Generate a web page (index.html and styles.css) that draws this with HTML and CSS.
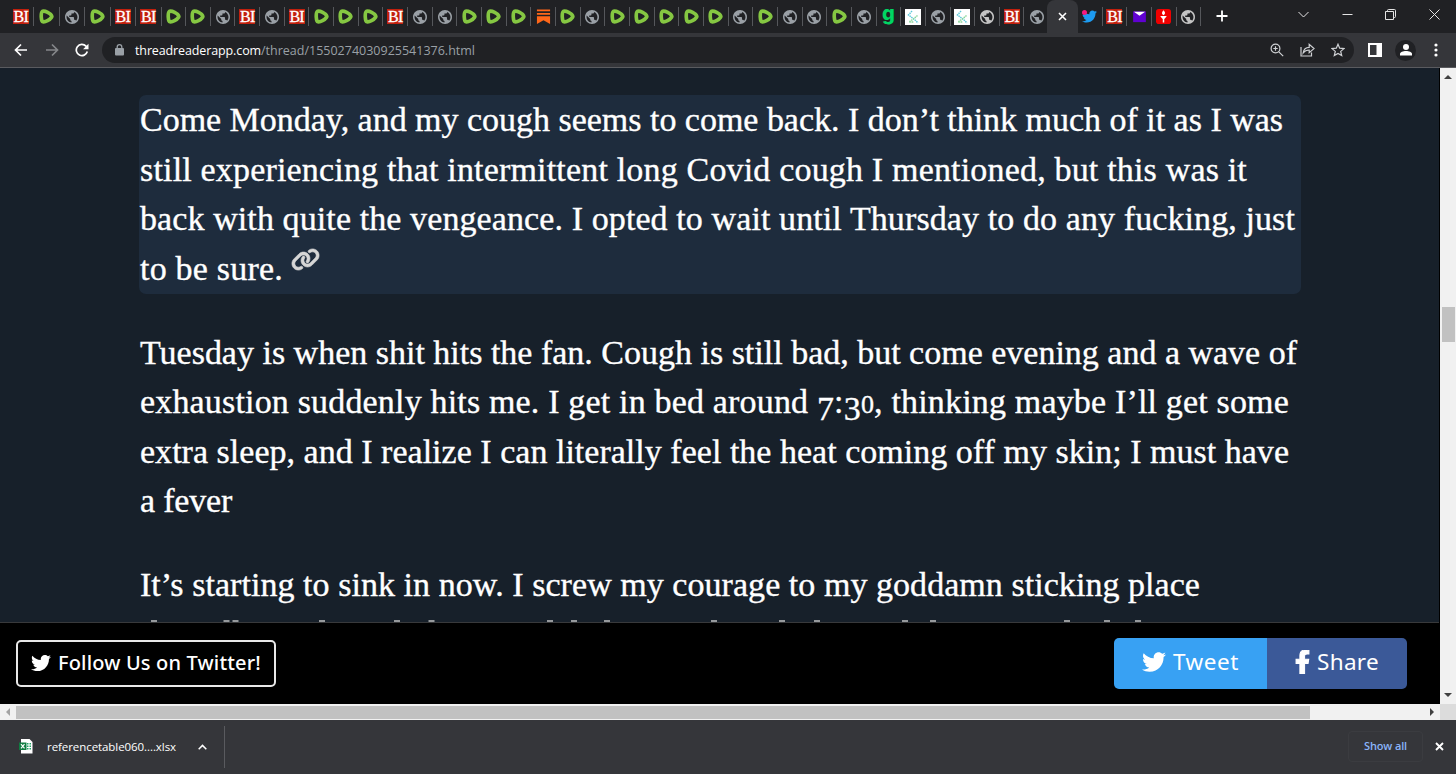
FILE: index.html
```html
<!DOCTYPE html>
<html lang="en">
<head>
  <meta charset="UTF-8" />
  <title>Thread Reader</title>
  <link rel="stylesheet" href="styles.css">
</head>
<body>
  <svg class="defs">
    <symbol id="globe" viewBox="2 2 20 20"><path fill="currentColor" d="M12 2C6.48 2 2 6.48 2 12s4.48 10 10 10 10-4.48 10-10S17.52 2 12 2z"/><path fill="#202124" d="M4.300 9.800 9.500 15v1c0 1 .9 1.600 1.800 1.600v2.300C7.300 19.600 4.200 16.200 4.200 12zM17.800 17.300c-.3-.9-1-1.400-1.900-1.400h-1v-2.700c0-.7-.5-1.200-1.100-1.200H8V9.700h2.200c.6 0 1-.4 1-1V7h2c1 0 1.800-.8 1.800-1.800v-.5c2.800 1.200 4.800 4 4.800 7.300 0 2.100-.7 3.900-2 5.300z"/></symbol>
    <symbol id="rumble" viewBox="0.500 0.700 14.800 14.800"><path d="M4 2.9C6.500 2.200 12 5 13 7.400c.3.600.2 1.100-.2 1.600C11 11.600 7 13.700 4.300 13.300 2.500 12.900 2 4.200 4 2.900z" fill="#202124" stroke="#85c742" stroke-width="3.600" stroke-linejoin="round"/><path d="M6.300 5.700v4.500l3.900-2.200z" fill="#202124"/></symbol>
    <symbol id="substack" viewBox="0 0 16 16"><path fill="#ff6719" d="M1 .5h14v2H1zM1 4.200h14v2H1zM1 7.600h14V16l-7-4-7 4z"/></symbol>
    <symbol id="dots" viewBox="0 0 16 16"><path fill="#fff" d="M0 0h16v16H0z"/><g fill="none" stroke-width="1.500" stroke-dasharray="1.500 .7"><path stroke="#5cc8d8" d="M7 2 3.500 6l6 4.500L13 14"/><path stroke="#8ad69a" d="M12.500 6.500 9 9.500l-5 3.500h5"/></g></symbol>
    <symbol id="mail" viewBox="0 0 16 16"><path fill="#6001d2" d="M1.200 2.500h13.600v11.500H1.200z"/><path fill="#fff" d="M2 3h12L8 7.300z"/></symbol>
    <symbol id="torch" viewBox="0 0 16 16"><rect width="16" height="16" rx="3" fill="#f00000"/><path fill="#fff" d="M8 1.200c2.200 1.900 2.200 4.200 0 5.400-2.200-1.200-2.200-3.500 0-5.400zM4.500 7.400h7l-2.200 3H6.700zM7.200 10h1.600v4.500H7.200z"/></symbol>
    <symbol id="bird" viewBox="0 0 512 512"><path fill="currentColor" d="M459.37 151.716c.325 4.548.325 9.097.325 13.645 0 138.72-105.583 298.558-298.558 298.558-59.452 0-114.68-17.219-161.137-47.106 8.447.974 16.568 1.299 25.34 1.299 49.055 0 94.213-16.568 130.274-44.832-46.132-.975-84.792-31.188-98.112-72.772 6.498.974 12.995 1.624 19.818 1.624 9.421 0 18.843-1.3 27.614-3.573-48.081-9.747-84.143-51.98-84.143-102.985v-1.299c13.969 7.797 30.214 12.67 47.431 13.319-28.264-18.843-46.781-51.005-46.781-87.391 0-19.492 5.197-37.36 14.294-52.954 51.655 63.675 129.3 105.258 216.365 109.807-1.624-7.797-2.599-15.918-2.599-24.04 0-57.828 46.782-104.934 104.934-104.934 30.213 0 57.502 12.67 76.67 33.137 23.715-4.548 46.456-13.32 66.599-25.34-7.798 24.366-24.366 44.833-46.132 57.827 21.117-2.273 41.584-8.122 60.426-16.243-14.292 20.791-32.161 39.308-52.628 54.253z"/></symbol>
  </svg>

  <header class="tabstrip">
    <div class="tabs" id="tabsLeft"></div>
    <div class="active-tab"><svg width="9" height="9" viewBox="0 0 9 9"><path d="M1 1l7 7M8 1L1 8" stroke="#fff" stroke-width="1.600"/></svg></div>
    <div class="tabs" id="tabsRight"></div>
    <svg class="new-tab" width="12" height="12" viewBox="0 0 12 12"><path d="M6 .5v11M.5 6h11" stroke="#fff" stroke-width="1.800"/></svg>
    <div class="window-buttons">
      <svg width="11" height="11" viewBox="0 0 11 11"><path d="M.5 3l5 5 5-5"/></svg>
      <svg width="11" height="11" viewBox="0 0 11 11"><path d="M.5 5.500h10"/></svg>
      <svg width="11" height="11" viewBox="0 0 11 11"><path d="M.5 2.500h8v8h-8zM2.500 2.500V1.500q0-1 1-1h6q1 0 1 1v6q0 1-1 1h-1"/></svg>
      <svg width="11" height="11" viewBox="0 0 11 11"><path d="M.5.5l10 10M10.500.5l-10 10"/></svg>
    </div>
  </header>

  <nav class="toolbar">
    <div class="nav-buttons">
      <svg width="14" height="14" viewBox="0 0 14 14"><path d="M13 7H1.500M7 1.500L1.500 7 7 12.500" stroke="#fff"/></svg>
      <svg width="14" height="14" viewBox="0 0 14 14"><path d="M1 7h11.500M7 1.500L12.500 7 7 12.500" stroke="#85878a"/></svg>
      <svg width="14" height="14" viewBox="0 0 14 14"><path d="M12.300 8.500A5.600 5.600 0 1 1 11 3.200L12.500 4.700" stroke="#fff"/><path d="M13.500 .8v5.400H8.100z" fill="#fff"/></svg>
    </div>
    <div class="omnibox">
      <svg class="lock" width="9" height="12" viewBox="0 0 9 12"><path d="M2.200 5V3a2.300 2.300 0 0 1 4.600 0v2" fill="none" stroke="#9aa0a6" stroke-width="1.300"/><rect y="4" width="9" height="7.500" rx="1" fill="#9aa0a6"/></svg>
      <span class="domain" data-w="126">threadreaderapp.com</span><span class="path" data-w="214">/thread/1550274030925541376.html</span>
      <div class="box-actions">
        <svg width="14" height="14" viewBox="0 0 14 14"><circle cx="5.500" cy="5.500" r="4.400"/><path d="M8.800 8.800l4.400 4.400M3.300 5.500h4.400M5.500 3.300v4.400"/></svg>
        <svg width="15" height="14" viewBox="0 0 15 14"><path d="M1 4v9h10.500V9.500M3.200 9.800C3.700 6.200 6 4.300 9.200 4.300V1.400l4.800 4.200-4.800 4.100V7C6.500 7 4.700 7.800 3.200 9.800z"/></svg>
        <svg width="14" height="14" viewBox="0 0 14 14"><path d="M7 1.200l1.700 4 4.300.4-3.300 2.800 1 4.200L7 10.400l-3.700 2.200 1-4.200L1 5.600l4.300-.4z"/></svg>
      </div>
    </div>
    <svg class="side-panel" width="14" height="14" viewBox="0 0 14 14"><path fill="#fff" fill-rule="evenodd" d="M0 0h14v14H0zM2 2v10h6.500V2z"/></svg>
    <div class="avatar"><svg width="12" height="12" viewBox="0 0 12 12"><circle cx="6" cy="3" r="3"/><path d="M0 11.500V10c0-2 3-3 6-3s6 1 6 3v1.500z"/></svg></div>
    <svg class="kebab" width="4" height="14" viewBox="0 0 4 14"><circle cx="2" cy="2" r="1.600"/><circle cx="2" cy="7" r="1.600"/><circle cx="2" cy="12" r="1.600"/></svg>
  </nav>

  <div class="viewport">
    <div class="page">
      <main class="thread">
        <p class="tweet highlighted">
          <span class="line" data-w="1143">Come Monday, and my cough seems to come back. I don’t think much of it as I was</span>
          <span class="line" data-w="1107">still experiencing that intermittent long Covid cough I mentioned, but this was it</span>
          <span class="line" data-w="1155">back with quite the vengeance. I opted to wait until Thursday to do any fucking, just</span>
          <span class="line" data-w="143">to be sure.</span>
          <svg class="permalink" width="29" height="23" viewBox="0 0 640 512"><path fill="#d6d6d6" stroke="#d6d6d6" stroke-width="14" d="M579.8 267.7c56.5-56.5 56.5-148 0-204.5c-50-50-128.8-56.5-186.3-15.4l-1.6 1.1c-14.4 10.3-17.7 30.3-7.4 44.6s30.3 17.7 44.6 7.4l1.6-1.1c32.1-22.9 76-19.3 103.8 8.6c31.5 31.5 31.5 82.5 0 114L422.3 334.8c-31.5 31.5-82.5 31.5-114 0c-27.9-27.9-31.5-71.8-8.6-103.8l1.1-1.6c10.3-14.4 6.9-34.4-7.4-44.6s-34.4-6.900-44.6 7.4l-1.1 1.6C206.5 251.2 213 330 263 380c56.5 56.5 148 56.5 204.5 0L579.8 267.7zM60.2 244.3c-56.5 56.5-56.5 148 0 204.5c50 50 128.8 56.5 186.3 15.4l1.6-1.1c14.4-10.3 17.7-30.3 7.4-44.6s-30.3-17.7-44.6-7.4l-1.6 1.1c-32.1 22.9-76 19.3-103.8-8.6C74 372 74 321 105.5 289.5L217.7 177.2c31.5-31.5 82.5-31.5 114 0c27.9 27.9 31.5 71.8 8.6 103.9l-1.1 1.6c-10.3 14.4-6.900 34.4 7.4 44.6s34.4 6.900 44.6-7.4l1.1-1.6C433.5 260.8 427 182 377 132c-56.5-56.5-148-56.5-204.5 0L60.2 244.3z"/></svg>
        </p>
        <p class="tweet">
          <span class="line" data-w="1157">Tuesday is when shit hits the fan. Cough is still bad, but come evening and a wave of</span>
          <span class="line" data-w="1149">exhaustion suddenly hits me. I get in bed around <span class="low">7</span>:<span class="low">3</span><span class="small">0</span>, thinking maybe I’ll get some</span>
          <span class="line" data-w="1149">extra sleep, and I realize I can literally feel the heat coming off my skin; I must have</span>
          <span class="line" data-w="92">a fever</span>
        </p>
        <p class="tweet">
          <span class="line" data-w="1060">It’s starting to sink in now. I screw my courage to my goddamn sticking place</span>
          <svg class="cut-line" id="cutLine" width="1160" height="2"></svg>
        </p>
      </main>
      <footer class="share-bar">
        <a class="follow"><svg width="20" height="20"><use href="#bird"/></svg><span data-w="203">Follow Us on Twitter!</span></a>
        <div class="share-buttons">
          <a class="tweet-btn"><svg width="24" height="24"><use href="#bird"/></svg><span data-w="66">Tweet</span></a>
          <a class="share-btn"><svg width="15" height="24" viewBox="0 0 320 512"><path fill="#fff" stroke="#fff" stroke-width="22" d="M279.14 288l14.22-92.66h-88.91v-60.13c0-25.35 12.42-50.06 52.24-50.06h40.42V6.260S260.43 0 225.36 0c-73.22 0-121.08 44.38-121.08 124.72v70.62H22.89V288h81.39v224h100.17V288z"/></svg><span data-w="62">Share</span></a>
        </div>
      </footer>
    </div>
    <div class="vscroll">
      <svg width="8" height="4" viewBox="0 0 8 4"><path d="M0 4l4-4 4 4z"/></svg>
      <div class="vthumb"></div>
      <svg width="8" height="4" viewBox="0 0 8 4"><path d="M0 0l4 4 4-4z"/></svg>
    </div>
  </div>

  <div class="hscroll">
    <svg width="4" height="8" viewBox="0 0 4 8"><path d="M4 0L0 4l4 4z" fill="#a3a3a3"/></svg>
    <div class="hthumb"></div>
    <svg class="right" width="4" height="8" viewBox="0 0 4 8"><path d="M0 0l4 4-4 4z" fill="#404040"/></svg>
    <div class="corner"></div>
  </div>

  <div class="downloads">
    <svg class="excel" width="14" height="15" viewBox="0 0 14 15"><path fill="#fff" d="M2 0h8.500L13.500 3v11.500H2z"/><path fill="#21a366" d="M8 4h1.500v1.500H8zM10.500 4H12v1.500h-1.500zM8 6.500h1.500V8H8zM10.500 6.500H12V8h-1.500zM8 9h1.500v1.500H8zM10.500 9H12v1.500h-1.500z"/><path fill="#107c41" d="M0 3.500h7.500V11H0z"/><path d="M2 5.200l3.500 4.200M5.500 5.200L2 9.400" stroke="#fff" stroke-width="1.200"/></svg>
    <span class="filename" data-w="129">referencetable060....xlsx</span>
    <svg class="chevron" width="9" height="6" viewBox="0 0 9 6"><path d="M.7 5.200L4.500 1.400l3.800 3.800" fill="none" stroke="#fff" stroke-width="1.500"/></svg>
    <div class="divider"></div>
    <button class="show-all"><span data-w="43">Show all</span></button>
    <svg class="close" width="9" height="9" viewBox="0 0 9 9"><path d="M1 1l7 7M8 1L1 8" stroke="#fff" stroke-width="1.900"/></svg>
  </div>

  <script>
    const left = 'bi rumble globe rumble bi bi rumble rumble globe bi globe bi rumble rumble rumble bi globe globe rumble rumble rumble substack rumble globe rumble rumble rumble rumble rumble globe rumble globe globe rumble globe g dots globe dots globe-light bi globe';
    const right = 'twitter bi mail torch globe-light';

    function favicon(name) {
      if (name === 'bi') return '<b class="bi">BI</b>';
      if (name === 'g') return '<b class="g">g</b>';
      if (name === 'twitter') return '<svg class="fav blue"><use href="#bird"/></svg><i class="notice"></i>';
      return `<svg class="fav ${name}"><use href="#${name.replace('-light', '')}"/></svg>`;
    }

    function drawTabs(id, list) {
      document.getElementById(id).innerHTML = list.split(' ').map(n => `<div class="tab">${favicon(n)}</div>`).join('');
    }

    drawTabs('tabsLeft', left);
    drawTabs('tabsRight', right);

    // tops of the tall letters of the line that runs under the share bar
    const tops = [151, 223.500, 232.500, 319, 394, 428.500, 547, 571, 604, 711, 779, 814, 902, 930, 1064, 1104, 1135];
    document.getElementById('cutLine').innerHTML = tops.map(x => `<rect x="${x - 140}" width="6" height="2" fill="#96999c"/>`).join('');

    // spread the letters so each text fills its measure
    document.querySelectorAll('[data-w]').forEach(el => {
      const w = el.getBoundingClientRect().width;
      el.style.letterSpacing = (el.dataset.w - w) / el.textContent.length + 'px';
    });
  </script>
</body>
</html>
```
FILE: styles.css
```css
* {
  box-sizing: border-box;
}
body {
  margin: 0;
  width: 1456px;
  height: 774px;
  overflow: hidden;
  display: flex;
  flex-direction: column;
  background: #35363a;
  font-family: "Open Sans", "Noto Sans", sans-serif;
}
svg {
  display: block;
  flex: none;
}
.defs {
  width: 0;
  height: 0;
  position: absolute;
}
span {
  white-space: nowrap;
}

/* tabs */
.tabstrip {
  height: 33px;
  flex: none;
  display: flex;
  background: #202124;
}
.tabs {
  display: flex;
  align-items: center;
}
#tabsLeft {
  padding-left: 8.500px;
  width: 1047px;
}
.tab {
  width: 24.660px;
  height: 19px;
  flex: none;
  display: flex;
  align-items: center;
  justify-content: center;
  border-right: 1px solid #55575b;
  position: relative;
}
#tabsLeft .tab:nth-child(-n+6) {
  width: 25.500px;
}
#tabsLeft .tab:last-child {
  border: 0;
}
.fav {
  width: 15px;
  height: 15px;
  color: #9aa0a6;
}
.dots {
  width: 16px;
  height: 16px;
}
.globe, .globe-light {
  width: 14px;
  height: 14px;
}
.globe-light {
  color: #c4c4c4;
}
.blue {
  color: #1d9bf0;
}
.notice {
  position: absolute;
  left: 4px;
  top: 3px;
  width: 5px;
  height: 5px;
  border-radius: 50%;
  background: #f5197f;
}
.bi {
  width: 16px;
  height: 15px;
  background: #c2200d;
  color: #fff;
  font: 16px/15px "Liberation Serif", serif;
  letter-spacing: -.8px;
  text-align: center;
  -webkit-text-stroke: .3px #fff;
}
.g {
  color: #00d563;
  font: 800 20px/15px Inter, sans-serif;
  height: 21px;
}
.active-tab {
  width: 31px;
  background: #35363a;
  border-radius: 8px 8px 0 0;
  display: flex;
  align-items: center;
  justify-content: center;
}
.new-tab {
  margin: 10px 0 0 15px;
}
.window-buttons {
  margin-left: auto;
  padding: 9px 16.500px 0 0;
  display: flex;
  gap: 32.500px;
}
.window-buttons path {
  fill: none;
  stroke: #e4e4e4;
}

/* toolbar */
.toolbar {
  height: 35px;
  flex: none;
  display: flex;
  align-items: center;
  border-bottom: 1px solid #5a5b5f;
}
.nav-buttons {
  display: flex;
  gap: 16.500px;
  margin-left: 14px;
}
.nav-buttons path {
  fill: none;
  stroke-width: 1.700;
}
.nav-buttons path[fill] {
  fill: #fff;
}
.omnibox {
  margin-left: 13px;
  width: 1252px;
  height: 26px;
  border-radius: 13px;
  background: #202124;
  display: flex;
  align-items: center;
  padding: 0 9px 0 13px;
  font-size: 12.500px;
}
.domain {
  color: #fff;
  margin-left: 11px;
}
.path {
  color: #9aa0a6;
}
.box-actions {
  margin-left: auto;
  display: flex;
  gap: 16px;
}
.box-actions svg * {
  fill: none;
  stroke: #cfd1d4;
  stroke-width: 1.200;
}
.side-panel {
  margin-left: 14px;
}
.avatar {
  width: 21px;
  height: 21px;
  margin-left: 13px;
  border-radius: 50%;
  background: #202124;
  display: flex;
  align-items: center;
  justify-content: center;
  fill: #fff;
}
.kebab {
  margin-left: 18px;
  fill: #fff;
}

/* page */
.viewport {
  height: 636px;
  flex: none;
  display: flex;
}
.page {
  width: 1440px;
  height: 636px;
  display: flex;
  flex-direction: column;
  background: #17202a;
  border-right: 1px solid #000;
}
.thread {
  height: 554px;
  flex: none;
  padding: 27px 0 0 139px;
  overflow: hidden;
}
.tweet {
  margin: 0 0 34px;
  padding-left: 1px;
  width: 1162px;
  height: 198.500px;
  color: #fff;
  font: 34px/49.600px "Liberation Serif", serif;
  -webkit-text-stroke: .35px #fff;
  display: flex;
  flex-wrap: wrap;
  align-items: flex-start;
  align-content: flex-start;
}
.line {
  height: 49.600px;
  margin-right: 8px;
  flex: none;
}
/* text figures */
.low, .small {
  line-height: 0;
}
.low {
  vertical-align: -7px;
}
.small {
  font-size: 26px;
}
.highlighted {
  background: #1e2c3d;
  border-radius: 7px;
}
.permalink {
  margin-top: 4px;
}
.cut-line {
  margin-top: 10.500px;
}
.share-bar {
  height: 82px;
  flex: none;
  background: #000;
  border-top: 1px solid #38393b;
  display: flex;
  align-items: center;
  justify-content: space-between;
  padding: 0 32px 0 16px;
  color: #fff;
}
.follow {
  width: 260px;
  height: 47px;
  border: 2px solid #e8e8e8;
  border-radius: 5px;
  display: flex;
  align-items: center;
  padding: 0 0 2px 13px;
  gap: 7px;
  font: 500 20px "Noto Sans", sans-serif;
}
.share-buttons {
  display: flex;
  height: 51px;
  border-radius: 5px;
  overflow: hidden;
  font: 22.500px "Noto Sans", sans-serif;
}
.tweet-btn, .share-btn {
  display: flex;
  align-items: center;
  justify-content: center;
  gap: 7px;
  padding-bottom: 4px;
}
.tweet-btn {
  width: 153px;
  background: #38a1f3;
}
.share-btn {
  width: 140px;
  background: #3b5998;
}

/* scrollbars */
.vscroll {
  width: 16px;
  background: #f1f1f1;
  display: flex;
  flex-direction: column;
  align-items: center;
  justify-content: space-between;
  padding: 7px 0;
  fill: #404040;
}
.vthumb {
  width: 13px;
  height: 35px;
  background: #c1c1c1;
  margin: 228px 0 auto;
}
.hscroll {
  height: 16px;
  flex: none;
  background: #f1f1f1;
  display: flex;
  align-items: center;
  padding-left: 6px;
}
.hthumb {
  width: 1294px;
  height: 13px;
  margin-left: 6px;
  background: #c1c1c1;
}
.right {
  margin-left: auto;
}
.corner {
  width: 16px;
  height: 16px;
  margin-left: 6px;
  background: #dcdcdc;
}

/* downloads */
.downloads {
  flex: 1;
  display: flex;
  align-items: center;
  padding: 0 12px 1px 19px;
}
.filename {
  margin-left: 14px;
  color: #fff;
  font-size: 11.500px;
}
.chevron {
  margin-left: 22px;
}
.divider {
  width: 1px;
  height: 42px;
  margin-left: 17px;
  background: #5a5b5f;
}
.show-all {
  margin-left: auto;
  width: 75px;
  height: 31px;
  padding: 0 0 2px;
  background: none;
  border: 1px solid #3b3c40;
  border-radius: 4px;
  color: #8ab4f8;
  font: 600 11px "Open Sans", sans-serif;
}
.close {
  margin-left: 12px;
}
```
